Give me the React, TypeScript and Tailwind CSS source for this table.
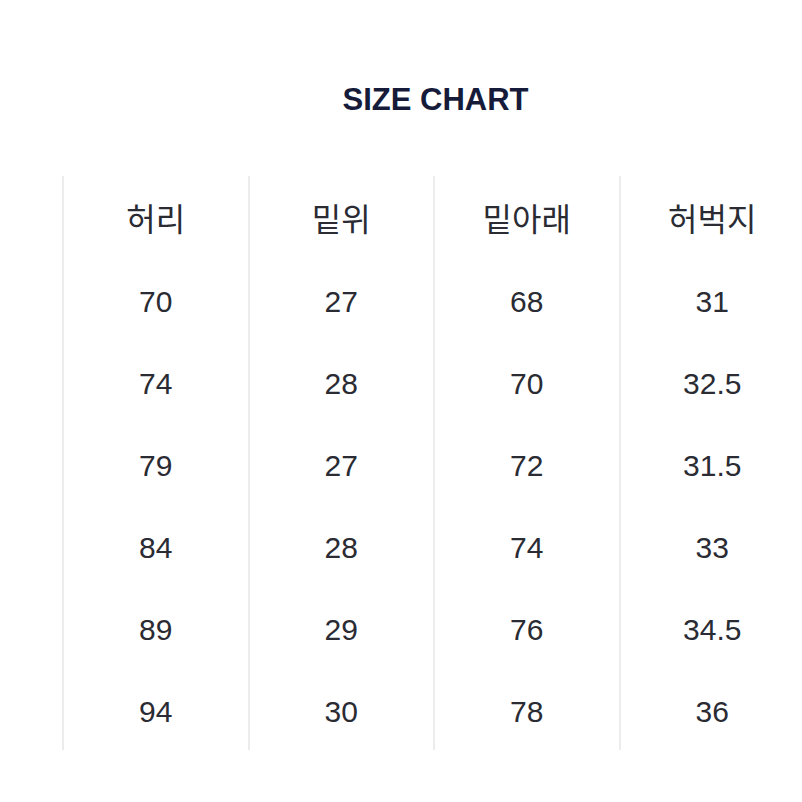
import React from "react";

const headers = ["허리", "밑위", "밑아래", "허벅지"];
const rows = [
  ["70", "27", "68", "31"],
  ["74", "28", "70", "32.5"],
  ["79", "27", "72", "31.5"],
  ["84", "28", "74", "33"],
  ["89", "29", "76", "34.5"],
  ["94", "30", "78", "36"],
];

export default function App() {
  return (
    <div className="w-[802px] h-[802px] overflow-hidden bg-white" style={{ fontFamily: '"Liberation Sans", Arial, sans-serif' }}>
      <div className="ml-[62px] w-[742px]">
        <h1 className="pt-[84px] pl-[5px] h-[176px] text-center text-[31px] leading-[31px] font-bold text-[#161b3a]">SIZE CHART</h1>
        <div className="grid grid-cols-4">
          {headers.map((h, i) => (
            <div key={i} className="border-l-2 border-[#ececec]">
              <div
                className="h-[82px] flex items-center justify-center text-[32px] text-[#2a2b33]"
                style={{ fontFamily: '"Noto Sans CJK KR", "Liberation Sans", sans-serif' }}
              >
                {h}
              </div>
              {rows.map((r, j) => (
                <div key={j} className="h-[82px] pt-[4px] flex items-center justify-center text-[30px] text-[#2a2b33]">
                  {r[i]}
                </div>
              ))}
            </div>
          ))}
        </div>
      </div>
    </div>
  );
}
